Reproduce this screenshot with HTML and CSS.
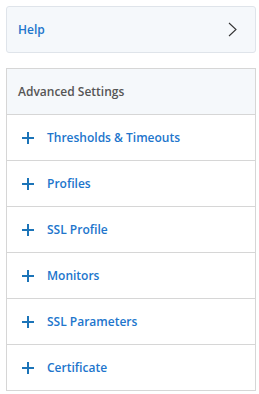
FILE: index.html
```html
<!DOCTYPE html>
<html lang="en">
<head>
    <meta charset="UTF-8">
    <title>Advanced Settings</title>
    <link rel="stylesheet" href="styles.css">
</head>
<body>

    <div class="help">
        <span class="help-label">Help</span>
        <svg class="chevron" width="9" height="15" viewBox="0 0 9 15">
            <path d="M1 1 L8 7.5 L1 14" fill="none" stroke="#333" stroke-width="1.1"/>
        </svg>
    </div>

    <div class="panel">
        <div class="panel-head">Advanced Settings</div>
        <div class="row"><span class="plus"></span>Thresholds &amp; Timeouts</div>
        <div class="row"><span class="plus"></span>Profiles</div>
        <div class="row"><span class="plus"></span>SSL Profile</div>
        <div class="row"><span class="plus"></span>Monitors</div>
        <div class="row"><span class="plus"></span>SSL Parameters</div>
        <div class="row"><span class="plus"></span>Certificate</div>
    </div>

</body>
</html>
```

FILE: styles.css
```css
body {
    font-family: "Open Sans", Arial, sans-serif;
    font-size: 12px;
    background-color: #fff;
    margin: 6px;
    width: 250px;
}

.help {
    display: flex;
    align-items: center;
    justify-content: space-between;
    height: 45px;
    padding: 0 18px 0 11px;
    background-color: #f5f8fb;
    border: 1px solid #dfe4ea;
    border-radius: 3px;
}

.help-label {
    color: #2175cc;
    font-weight: 600;
}

.panel {
    margin-top: 15px;
    border: 1px solid #d6d6d6;
}

.panel-head {
    display: flex;
    align-items: center;
    height: 45px;
    padding-left: 11px;
    background-color: #f5f8fb;
    border-bottom: 1px solid #d6d6d6;
    color: #555;
    font-weight: 600;
}

.row {
    display: flex;
    align-items: center;
    height: 45px;
    padding-left: 15px;
    border-bottom: 1px solid #d6d6d6;
    color: #2175cc;
    font-weight: 600;
}

.row:last-child {
    border-bottom: none;
}

.plus {
    position: relative;
    width: 12px;
    height: 12px;
    margin-right: 13px;
}

.plus::before,
.plus::after {
    content: "";
    position: absolute;
    background-color: #1c74b8;
}

.plus::before {
    left: 0;
    top: 5px;
    width: 12px;
    height: 2px;
}

.plus::after {
    left: 5px;
    top: 0;
    width: 2px;
    height: 12px;
}
```
